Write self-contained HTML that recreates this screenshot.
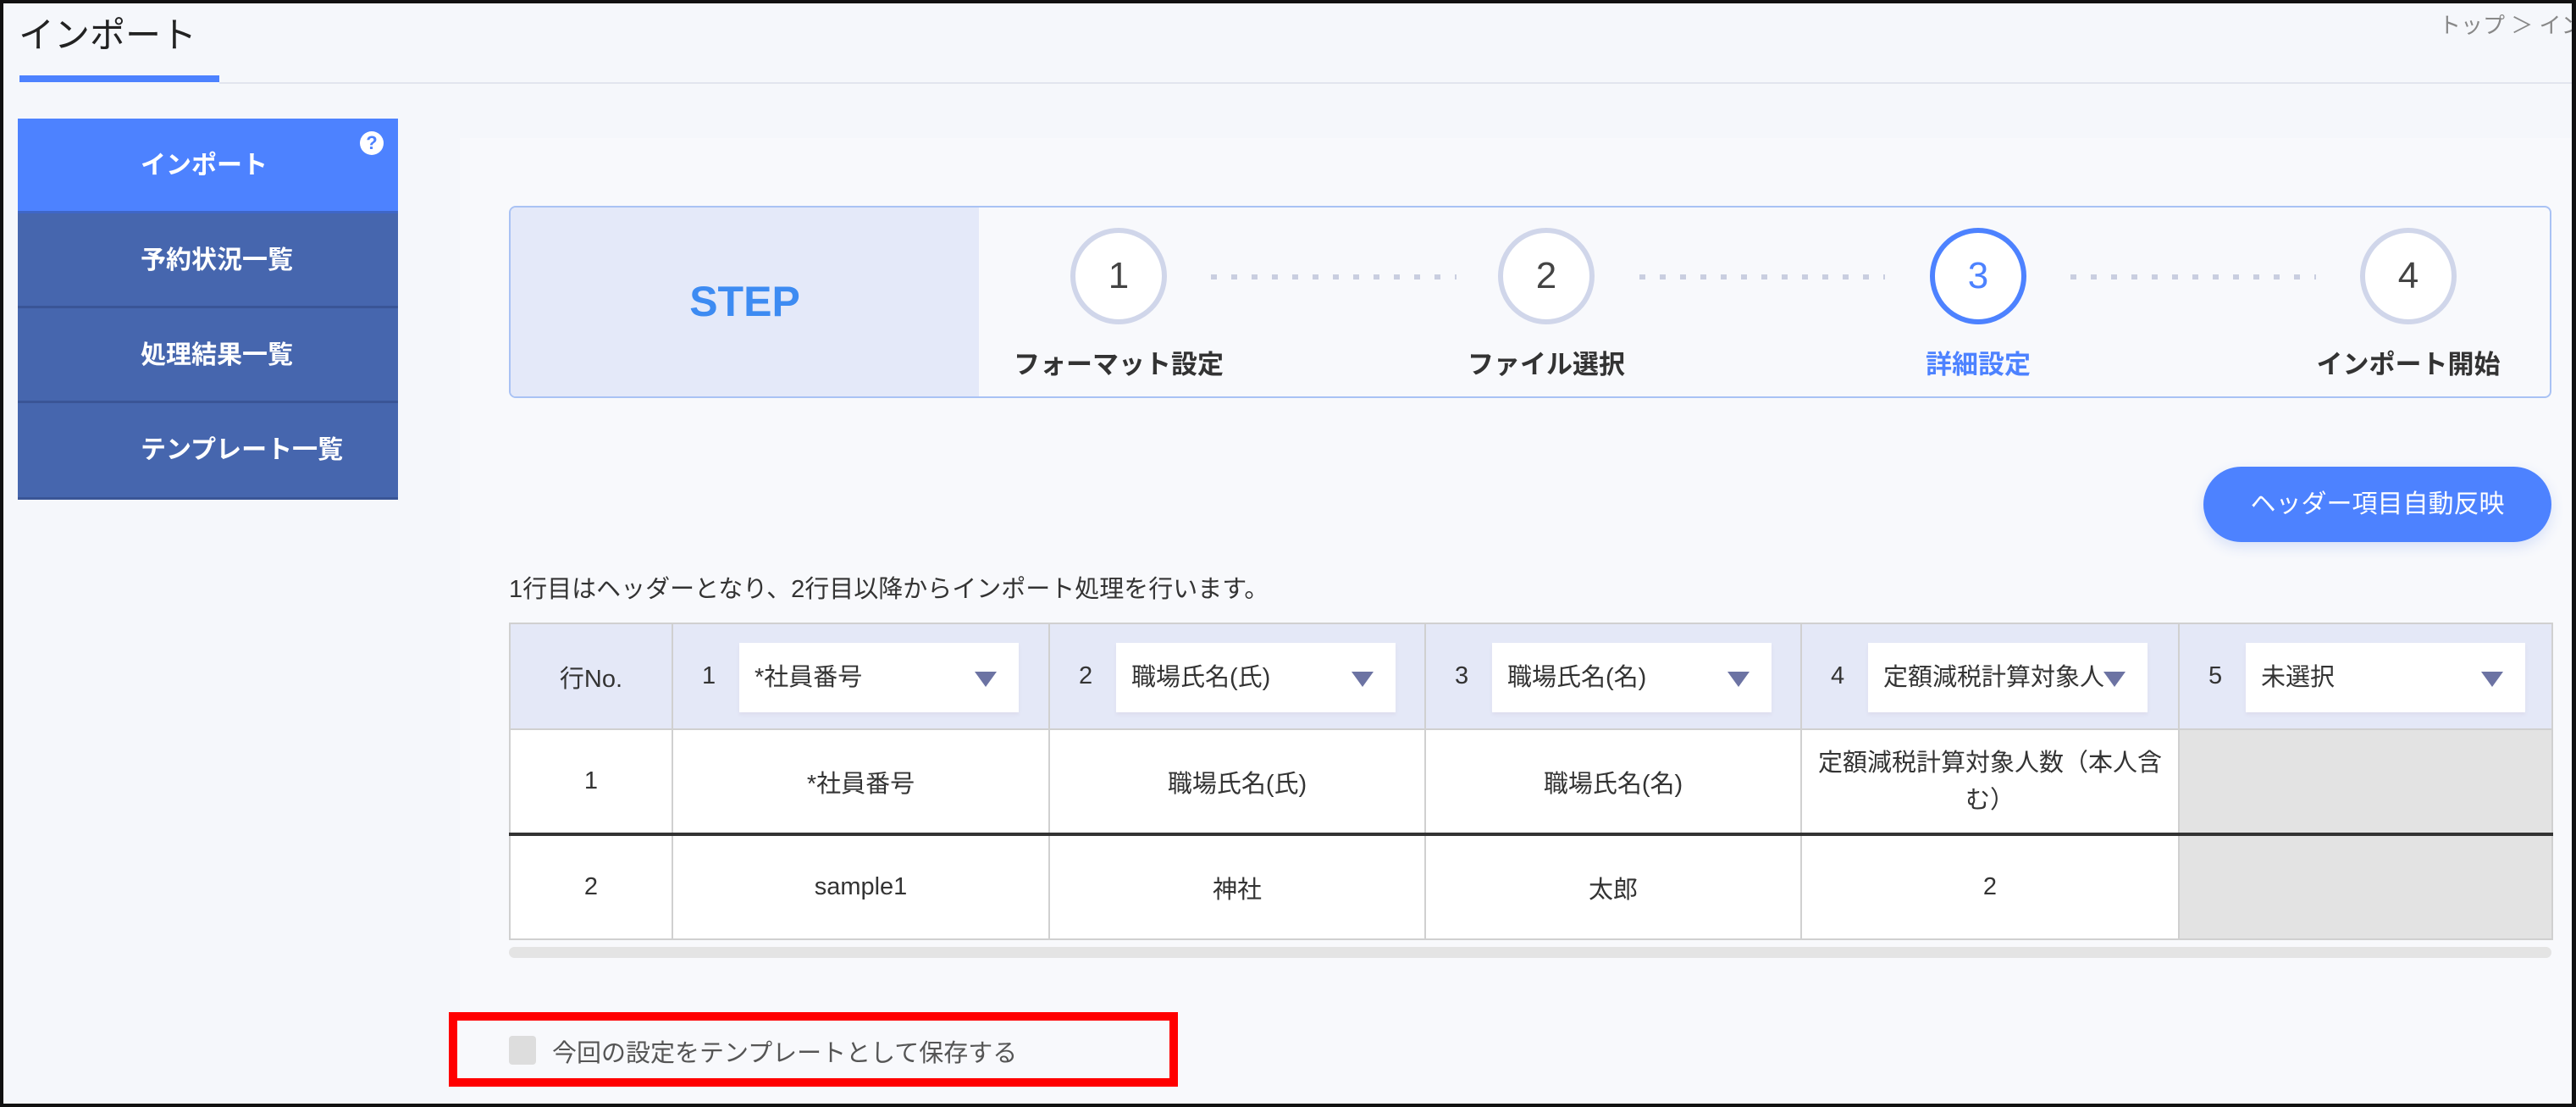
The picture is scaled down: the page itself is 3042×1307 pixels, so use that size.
<!DOCTYPE html>
<html><head><meta charset="utf-8"><style>
*{box-sizing:border-box;margin:0;padding:0}
body{width:3042px;height:1307px;overflow:hidden;background:#f5f7fb;font-family:"Liberation Sans","Noto Sans CJK JP",sans-serif;color:#333;position:relative}
.a{position:absolute}
.frame{left:0;top:0;width:3042px;height:1307px;border:4px solid #111;border-right-width:5px;z-index:10}
.side div{position:absolute;left:0;width:449px;height:112px;background:#4666ae;color:#fff;font-size:30px;font-weight:bold;line-height:112px;padding-left:145px;border-bottom:3px solid #3a5596}
.circ{width:114px;height:114px;border-radius:50%;border:6px solid #d0d6ea;background:#fff;text-align:center;line-height:102px;font-size:44px;color:#444}
.lbl{font-size:31px;font-weight:bold;color:#333;width:400px;text-align:center;top:405px}
.dots{top:324px;height:6px;width:290px;background:repeating-linear-gradient(90deg,#c9cee0 0 7px,transparent 7px 24px)}
td{border:2px solid #d0d0d0;text-align:center;font-size:29px;color:#333;vertical-align:middle}
table{border-collapse:collapse;position:absolute;left:601px;top:735px;width:2412px;table-layout:fixed}
th{background:#e4e8f7;border:2px solid #d0d0d0;font-weight:normal;font-size:29px;height:125px;text-align:left;padding-left:34px;position:relative}
.sel{position:absolute;left:78px;top:22px;width:330px;height:82px;background:#fff;box-shadow:0 3px 4px #dde;line-height:82px;padding-left:18px;white-space:nowrap;overflow:hidden}
.sel:after{content:"";position:absolute;right:26px;top:34px;border-left:13px solid transparent;border-right:13px solid transparent;border-top:18px solid #6c73a3}
</style></head><body>
<div class="a frame"></div>
<div class="a" style="left:22px;top:8px;font-size:42px;color:#222">インポート</div>
<div class="a" style="left:2880px;top:10px;font-size:26px;color:#888;white-space:nowrap">トップ ＞ イン</div>
<div class="a" style="left:23px;top:89px;width:236px;height:8px;background:#4d82ff"></div>
<div class="a" style="left:259px;top:97px;width:2783px;height:2px;background:#e2e5ee"></div>
<div class="a side" style="left:21px;top:140px">
<div style="top:0;background:#4d82ff;border-bottom-color:#3e66c8">インポート</div>
<div style="top:112px">予約状況一覧</div>
<div style="top:224px">処理結果一覧</div>
<div style="top:336px;height:114px">テンプレート一覧</div>
</div>
<div class="a" style="left:425px;top:155px;width:28px;height:28px;border-radius:50%;background:#fff;color:#4d82ff;font-size:22px;font-weight:bold;text-align:center;line-height:28px">?</div>
<div class="a" style="left:543px;top:163px;width:2499px;height:1144px;background:#f8f9fc"></div>
<div class="a" style="left:601px;top:243px;width:2412px;height:227px;border:2px solid #a9c2f4;border-radius:8px;background:#f8f9fc;overflow:hidden">
<div class="a" style="left:0;top:0;width:553px;height:227px;background:#e4e9f9;color:#3d8bf2;font-size:50px;font-weight:bold;text-align:center;line-height:223px">STEP</div>
</div>
<div class="a circ" style="left:1264px;top:269px">1</div>
<div class="a circ" style="left:1769px;top:269px">2</div>
<div class="a circ" style="left:2279px;top:269px;border-color:#4d82ff;color:#4d82ff">3</div>
<div class="a circ" style="left:2787px;top:269px">4</div>
<div class="a dots" style="left:1430px"></div>
<div class="a dots" style="left:1936px"></div>
<div class="a dots" style="left:2445px"></div>
<div class="a lbl" style="left:1121px">フォーマット設定</div>
<div class="a lbl" style="left:1626px">ファイル選択</div>
<div class="a lbl" style="left:2136px;color:#4d82ff">詳細設定</div>
<div class="a lbl" style="left:2644px">インポート開始</div>
<div class="a" style="left:2602px;top:551px;width:411px;height:89px;border-radius:45px;background:#4d82ff;color:#fff;font-size:30px;text-align:center;line-height:89px;box-shadow:0 6px 16px #d6e0f8">ヘッダー項目自動反映</div>
<div class="a" style="left:601px;top:672px;font-size:29px;color:#333">1行目はヘッダーとなり、2行目以降からインポート処理を行います。</div>
<table>
<colgroup><col style="width:192px"><col style="width:445px"><col style="width:444px"><col style="width:444px"><col style="width:446px"><col style="width:441px"></colgroup>
<tr><th style="text-align:center;padding:0">行No.</th>
<th>1<div class="sel">*社員番号</div></th>
<th>2<div class="sel">職場氏名(氏)</div></th>
<th>3<div class="sel">職場氏名(名)</div></th>
<th>4<div class="sel">定額減税計算対象人</div></th>
<th>5<div class="sel">未選択</div></th></tr>
<tr style="height:124px;background:#fff"><td>1</td><td>*社員番号</td><td>職場氏名(氏)</td><td>職場氏名(名)</td><td style="line-height:44px">定額減税計算対象人数（本人含む）</td><td style="background:#e3e3e3"></td></tr>
<tr style="height:124px;background:#fff;border-top:4px solid #333"><td>2</td><td>sample1</td><td>神社</td><td>太郎</td><td>2</td><td style="background:#e3e3e3"></td></tr>
</table>
<div class="a" style="left:601px;top:1118px;width:2412px;height:13px;border-radius:7px;background:#e4e4e4"></div>
<div class="a" style="left:530px;top:1195px;width:861px;height:88px;border:10px solid #ff0000;background:#f8f9fc"></div>
<div class="a" style="left:601px;top:1223px;width:32px;height:34px;border-radius:4px;background:#ddd"></div>
<div class="a" style="left:652px;top:1220px;font-size:29px;color:#555">今回の設定をテンプレートとして保存する</div>
</body></html>
